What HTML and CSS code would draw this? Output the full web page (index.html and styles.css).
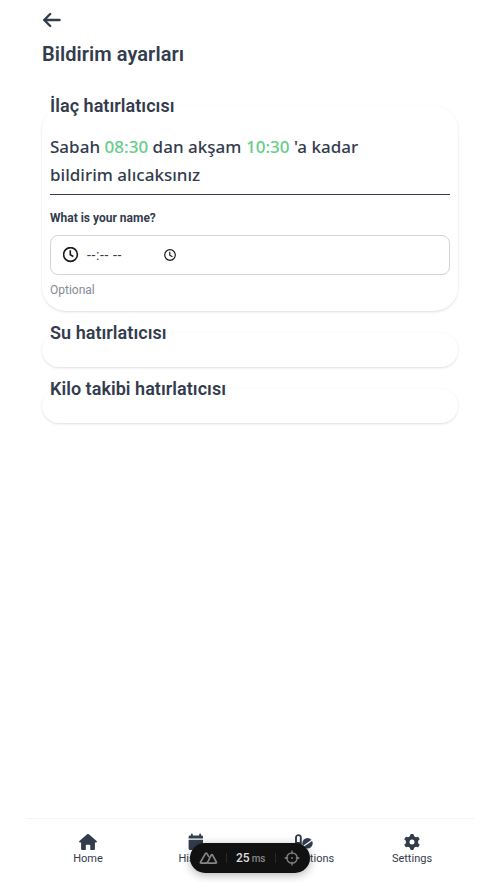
FILE: index.html
```html
<!DOCTYPE html>
<html lang="tr">
<head>
<meta charset="utf-8">
<title>Bildirim ayarları</title>
<link rel="stylesheet" href="styles.css">
</head>
<body>
<div class="app">
  <main class="content">
    <a class="back" aria-label="Geri">
      <svg width="20" height="20" viewBox="0 0 20 20" fill="none" stroke="currentColor" stroke-width="2.4" stroke-linecap="round" stroke-linejoin="round"><path d="M17.5 10H2.2M8.2 4 2.2 10l6 6"/></svg>
    </a>
    <h1 class="title">Bildirim ayarları</h1>
    <fieldset class="card">
      <legend>İlaç hatırlatıcısı</legend>
      <p class="summary">Sabah <span class="time">08:30</span> dan akşam <span class="time">10:30</span> 'a kadar<br>bildirim alıcaksınız</p>
      <div class="label">What is your name?</div>
      <div class="field">
        <svg class="lead" width="16" height="16" viewBox="0 0 16 16" fill="none" stroke="currentColor" stroke-width="1.6"><circle cx="7.5" cy="7.5" r="6.9"/><path d="M7.3 3.3V7.8l3 1.7"/></svg>
        <span class="value">--:-- --</span>
        <svg class="picker" width="12" height="12" viewBox="0 0 12 12" fill="none" stroke="currentColor" stroke-width="1.2"><circle cx="6" cy="6" r="5.3"/><path d="M5.8 2.8V6.2l2.6 1.6"/></svg>
      </div>
      <div class="help">Optional</div>
    </fieldset>
    <fieldset class="card"><legend>Su hatırlatıcısı</legend></fieldset>
    <fieldset class="card"><legend>Kilo takibi hatırlatıcısı</legend></fieldset>
  </main>
  <nav class="tabs">
    <a class="tab">
      <svg width="18" height="18" viewBox="0 0 18 18" fill="currentColor"><path d="M8.1 1.3Q9 .7 9.9 1.3L17.6 8Q18.3 9 17.2 9.5H15.9V16Q15.9 17 14.9 17H11.3V12.6Q11.3 11.7 10.4 11.7H7.7Q6.8 11.7 6.8 12.6V17H3.1Q2.1 17 2.1 16V9.5H.8Q-.3 9 .4 8Z"/></svg>
      <span>Home</span>
    </a>
    <a class="tab">
      <svg width="18" height="18" viewBox="0 0 18 18" fill="currentColor"><path d="M4 2.6V1.5a.9.9 0 0 1 1.8 0V2.6h6.4V1.5a.9.9 0 0 1 1.8 0V2.6h.7Q16 2.6 16 4v1.6H1.6V4Q1.6 2.6 3 2.6ZM1.6 6.7H16v8.9q0 1.4-1.4 1.4H3q-1.4 0-1.4-1.4Z"/></svg>
      <span>History</span>
    </a>
    <a class="tab">
      <svg width="20" height="18" viewBox="0 0 20 18"><path d="M2 8V4.5a2.4 2.4 0 0 1 4.8 0v8.5a2.4 2.4 0 0 1-4.8 0Z" fill="none" stroke="currentColor" stroke-width="1.9"/><path d="M2 9h5v4a2.5 2.5 0 0 1-5 0Z" fill="currentColor"/><circle cx="13.5" cy="10.3" r="5.2" fill="currentColor"/><path d="m9 13.5 9-6.2" stroke="#fff" stroke-width="1.2"/></svg>
      <span>Medications</span>
    </a>
    <a class="tab">
      <svg width="18" height="18" viewBox="0 0 18 18"><g fill="currentColor" stroke="currentColor" stroke-linejoin="round"><circle cx="9" cy="9" r="5.7"/><path id="tooth" stroke-width="1" d="M7.3 4.5 7.8 1.5h2.4l.5 3v9l-.5 3H7.8l-.5-3Z"/><use href="#tooth" transform="rotate(60 9 9)"/><use href="#tooth" transform="rotate(120 9 9)"/></g><circle cx="9" cy="9" r="2.5" fill="#fff"/></svg>
      <span>Settings</span>
    </a>
  </nav>
</div>
<div class="devtools">
  <svg class="mark" width="20" height="14" viewBox="0 0 20 14" fill="none" stroke="currentColor" stroke-width="1.7" stroke-linejoin="round"><path d="M8.7 12.2H2.3Q.9 12.2 1.6 11L6.4 2.6Q7.2 1.4 8 2.6L10 6.1"/><path d="M8.7 12.2H16.5Q18 12.2 17.3 11L13.7 4.3Q12.9 3.1 12.1 4.3L9.3 10Q8.2 12.2 6.4 12.2"/></svg>
  <i class="sep"></i>
  <span class="load">25 <small>ms</small></span>
  <i class="sep"></i>
  <svg class="target" width="16" height="16" viewBox="0 0 16 16" fill="none" stroke="currentColor" stroke-width="1.3"><circle cx="8" cy="8" r="5.2"/><path d="M8 .6v3.6M8 11.8v3.6M.6 8h3.6M11.8 8h3.6"/><circle cx="8" cy="8" r=".9" fill="currentColor" stroke="none"/></svg>
</div>
</body>
</html>
```
FILE: styles.css
```css
* { box-sizing: border-box; }
body {
  margin: 0;
  background: #fff;
  color: #333c4d;
  font-family: Roboto, "Liberation Sans", sans-serif;
}
.app {
  width: 448px;
  height: 882px;
  margin: 0 auto;
  display: flex;
  flex-direction: column;
}
.content {
  flex: 1;
  padding: 10px 16px 0;
}
.back { display: block; height: 20px; }
.back svg { display: block; }
.title {
  margin: 10px 0 24px;
  font-size: 20px;
  line-height: 28px;
  font-weight: 600;
  letter-spacing: .06px;
}
.card {
  min-width: 0;
  margin: 0 0 8px;
  padding: 0 8px 20px;
  border: 0;
  border-radius: 24px;
  box-shadow: 0 1px 3px rgba(0, 0, 0, .1), 0 1px 2px -1px rgba(0, 0, 0, .1);
}
.card legend {
  padding: 0;
  font-size: 18px;
  line-height: 28px;
  font-weight: 600;
  letter-spacing: .04px;
}
.card:first-of-type { padding-bottom: 13px; }
.summary {
  margin: 0;
  padding: 13px 0 5px;
  border-bottom: 1px solid #333c4d;
  font-family: "Noto Sans", sans-serif;
  font-size: 17px;
  line-height: 28px;
  font-weight: 500;
  letter-spacing: .02px;
}
.time { color: #66cc8a; }
.label {
  margin: 15px 0 9px;
  font-size: 12px;
  line-height: 16px;
  font-weight: 700;
}
.field {
  height: 40px;
  display: flex;
  align-items: center;
  padding: 0 12px;
  border: 1px solid #d2d4d7;
  border-radius: 8px;
  color: #18191c;
}
.value {
  width: 77px;
  margin-left: 8px;
  font-size: 14px;
  letter-spacing: .6px;
  white-space: nowrap;
  color: #333c4d;
}
.help {
  margin-top: 7px;
  font-size: 12px;
  line-height: 16px;
  color: #858a94;
}
.tabs {
  height: 64px;
  padding: 14px 8px 0;
  border-top: 1px solid #f3f4f6;
  display: grid;
  grid-template-columns: repeat(4, 1fr);
}
.tab {
  display: flex;
  flex-direction: column;
  align-items: center;
  font-size: 11px;
  line-height: 16px;
}
.devtools {
  position: absolute;
  left: 190px;
  top: 843px;
  width: 120px;
  height: 30px;
  display: flex;
  align-items: center;
  padding: 0 10px 0 9px;
  border-radius: 15px;
  background: #111;
  color: #858585;
  box-shadow: 0 2px 10px rgba(0, 0, 0, .3);
}
.sep {
  width: 1px;
  height: 10px;
  margin: 0 8px 0 7px;
  background: #2a2a2a;
}
.load {
  width: 33px;
  padding-left: 1px;
  font-size: 12px;
  font-weight: 500;
  color: #ddd;
  white-space: nowrap;
}
.load small { font-size: 10px; color: #888; margin-left: -1px; }
.target { flex: none; }
```
